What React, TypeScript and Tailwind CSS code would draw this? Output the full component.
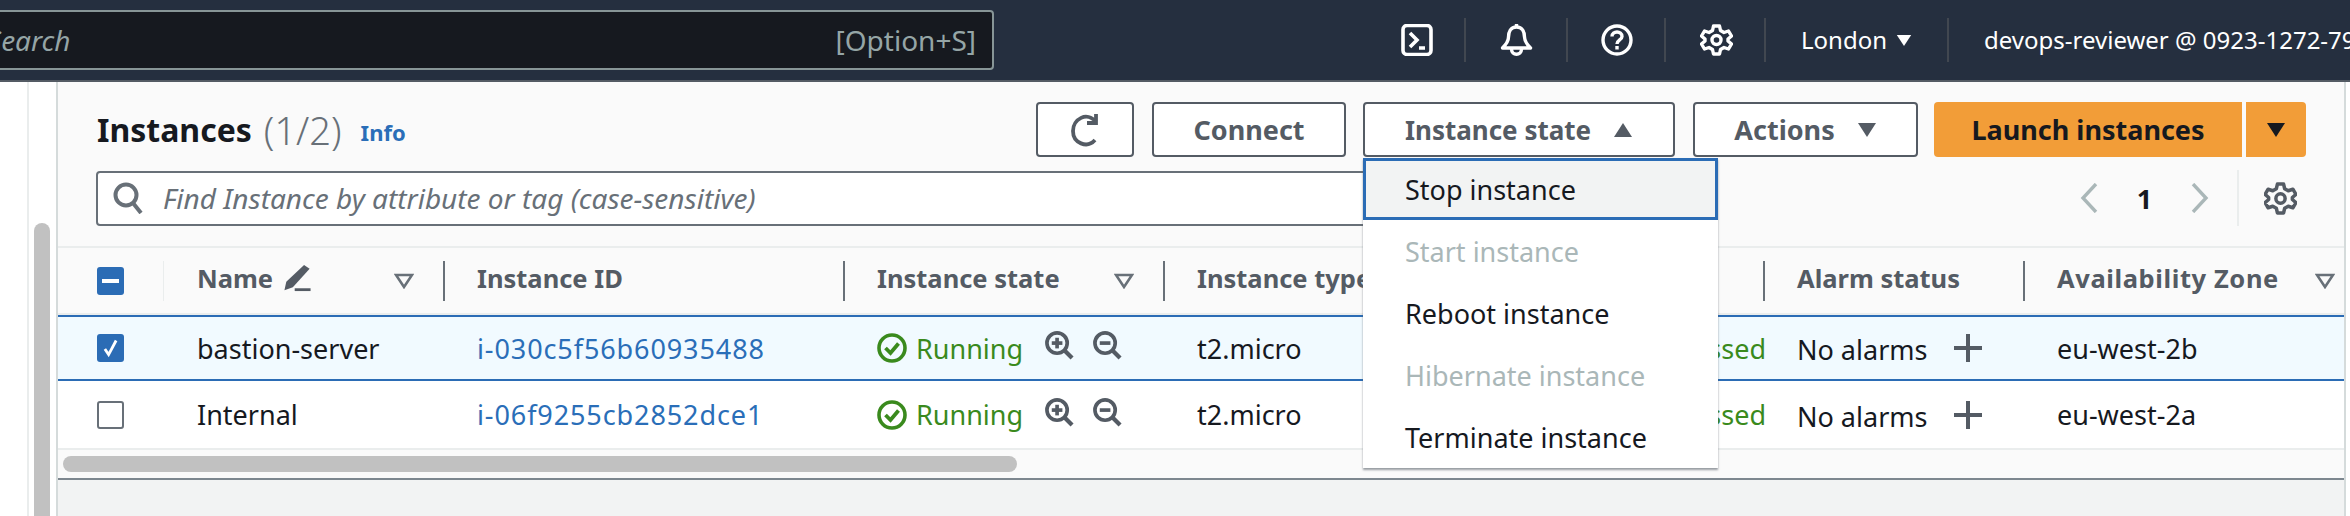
const Caret = ({ up, className }: { up?: boolean; className: string }) => (
  <svg viewBox="0 0 20 16" className={className} fill="currentColor">
    <path d={up ? 'M10 1 L19 15 L1 15 Z' : 'M1 1 L19 1 L10 15 Z'} />
  </svg>
)

const FilterArrow = () => (
  <svg viewBox="0 0 20 16" className="w-[20px] h-[16px] text-[#687078]" fill="none" stroke="currentColor" strokeWidth="2.6">
    <path d="M2 2 H18 L10 14 Z" />
  </svg>
)

const Gear = ({ className }: { className: string }) => (
  <svg viewBox="0 0 32 32" className={className} fill="none" stroke="currentColor" strokeWidth="3.4" strokeLinejoin="round">
    <path d="M13 2 H19 L20 6.5 L23.5 8.5 L28 7 L31 12 L27.5 15 V17 L31 20 L28 25 L23.5 23.5 L20 25.5 L19 30 H13 L12 25.5 L8.5 23.5 L4 25 L1 20 L4.5 17 V15 L1 12 L4 7 L8.5 8.5 L12 6.5 Z" />
    <circle cx="16" cy="16" r="4.5" />
  </svg>
)

const Magnifier = ({ plus }: { plus?: boolean }) => (
  <svg viewBox="0 0 30 30" className="w-[29px] h-[29px] text-[#545b64]" fill="none" stroke="currentColor" strokeWidth="3.8">
    <circle cx="12.5" cy="12.5" r="10.5" />
    <path d="M20 20 L28 28" strokeWidth="4.4" />
    <path d="M7 12.5 H18" />
    {plus && <path d="M12.5 7 V18" />}
  </svg>
)

const Running = () => (
  <div className="flex items-center">
    <svg viewBox="0 0 30 32" className="w-[30px] h-[32px] shrink-0 text-[#3a8a1d]" fill="none" stroke="currentColor" strokeWidth="3.6">
      <circle cx="15" cy="16" r="13" />
      <path d="M8.5 16 L13.5 21 L21.5 11.5" strokeWidth="3.8" />
    </svg>
    <span className="ml-[9px] w-[105px] text-[#3a8a1d]">Running</span>
    <span className="ml-[24px] mb-[5px]"><Magnifier plus /></span>
    <span className="ml-[19px] mb-[5px]"><Magnifier /></span>
  </div>
)

const HeaderCell = ({ width, label, labelWidth, filter, filterGap }: { width: string; label: string; labelWidth?: string; filter?: boolean; filterGap?: string }) => (
  <div className={`flex items-center h-full shrink-0 ${width}`}>
    <span className="w-[2px] h-[40px] bg-[#687078] shrink-0" />
    <span className={`ml-[32px] pb-[3px] whitespace-nowrap ${labelWidth ?? ''}`}>{label}</span>
    {filter && <span className={filterGap}><FilterArrow /></span>}
  </div>
)

const Row = ({ name, id, zone, selected }: { name: string; id: string; zone: string; selected?: boolean }) => (
  <div className={`flex items-center text-[#16191f] ${selected ? 'h-[66px] bg-[#f1faff] border-y-2 border-[#2b6cb5]' : 'h-[67px] bg-white'}`}>
    <div className="w-[105px] pl-[39px] shrink-0">
      {selected ? (
        <div className="w-[27px] h-[28px] rounded-[3px] bg-[#2b6cb5] flex items-center justify-center">
          <svg viewBox="0 0 16 20" className="w-[15px] h-[20px]" fill="none" stroke="white" strokeWidth="3">
            <path d="M2 11 L6 17 L14 2" />
          </svg>
        </div>
      ) : (
        <div className="w-[27px] h-[28px] rounded-[3px] bg-white border-2 border-[#687078]" />
      )}
    </div>
    <div className="w-[280px] pl-[34px] shrink-0">{name}</div>
    <div className="w-[400px] pl-[34px] shrink-0 text-[#2a6eb8] tracking-[0.9px]">{id}</div>
    <div className="w-[320px] pl-[34px] shrink-0"><Running /></div>
    <div className="w-[337px] pl-[34px] shrink-0">t2.micro</div>
    <div className="w-[266px] shrink-0 text-right text-[#3a8a1d] whitespace-nowrap">2/2 checks passed</div>
    <div className="w-[257px] pl-[31px] shrink-0 flex items-center">
      <span className="w-[128px] mt-[3px] whitespace-nowrap">No alarms</span>
      <svg viewBox="0 0 28 28" className="ml-[29px] w-[28px] h-[28px] text-[#545b64]" fill="currentColor">
        <path d="M12 0 H16 V12 H28 V16 H16 V28 H12 V16 H0 V12 H12 Z" />
      </svg>
    </div>
    <div className="pl-[34px]">{zone}</div>
  </div>
)

const Divider = () => <span className="w-[2px] h-[44px] bg-[#414750] shrink-0" />

const OutlineButton = ({ children, className }: { children: React.ReactNode; className: string }) => (
  <div className={`h-[55px] flex items-center justify-center border-2 border-[#545b64] rounded-[4px] bg-white font-bold text-[#545b64] ${className}`}>
    {children}
  </div>
)

export default function App() {
  return (
    <div className="w-[2350px] h-[516px] overflow-hidden flex flex-col bg-white text-[27px] leading-none font-['Noto_Sans',sans-serif]">
      <header className="h-[82px] shrink-0 bg-[#252f3f] border-b-2 border-[#545b64] flex items-center text-white">
        <div className="ml-[-12px] w-[1006px] h-[60px] mb-[1px] shrink-0 flex items-center justify-between pr-[16px] bg-[#16191f] border-2 border-[#879596] rounded-[4px] text-[28px] text-[#95a5a6]">
          <span className="ml-[-3px] italic">Search</span>
          <span>[Option+S]</span>
        </div>
        <div className="ml-[374px] w-[98px] shrink-0 flex items-center justify-between">
          <svg viewBox="0 0 32 32" className="ml-[33px] w-[32px] h-[32px]" fill="none" stroke="white" strokeWidth="3.6">
            <rect x="2" y="1.5" width="28" height="29" rx="4" />
            <path d="M9 9 L16 16 L9 23 M18 24 H24" />
          </svg>
          <Divider />
        </div>
        <div className="w-[102px] shrink-0 flex items-center justify-between">
          <svg viewBox="0 0 32 32" className="ml-[34px] w-[33px] h-[32px]" fill="none" stroke="white" strokeWidth="3.4" strokeLinejoin="round">
            <path d="M16 3 C22 3 24 8 24 13 C24 18 27 21 30 24 H2 C5 21 8 18 8 13 C8 8 10 3 16 3 Z" />
            <path d="M11 25 C11 32 21 32 21 25" />
            <path d="M16 0 V3" />
          </svg>
          <Divider />
        </div>
        <div className="w-[98px] shrink-0 flex items-center justify-between">
          <svg viewBox="0 0 32 32" className="ml-[33px] w-[32px] h-[32px]" fill="none" stroke="white" strokeWidth="3.4">
            <circle cx="16" cy="16" r="14" />
            <path d="M11 12.5 C11 6.5 21 6.5 21 12.5 C21 16 16 16 16 20" />
            <path d="M16 22 V25.5" />
          </svg>
          <Divider />
        </div>
        <div className="w-[100px] shrink-0 flex items-center justify-between">
          <Gear className="ml-[34px] w-[33px] h-[32px]" />
          <Divider />
        </div>
        <div className="w-[183px] shrink-0 flex items-center">
          <span className="ml-[35px] w-[82px] text-[24px]">London</span>
          <Caret className="ml-[13px] w-[16px] h-[13px] text-white" />
          <span className="ml-auto flex"><Divider /></span>
        </div>
        <span className="ml-[35px] shrink-0 text-[24px] whitespace-nowrap">devops-reviewer @ 0923-1272-7911</span>
      </header>

      <div className="flex-1 flex min-h-0">
        <div className="w-[56px] shrink-0 pl-[27px] flex">
          <span className="w-[2px] bg-[#eaeded]" />
          <span className="ml-[5px] mt-[141px] w-[16px] bg-[#c1c1c1] rounded-t-[8px]" />
        </div>

        <div className="relative w-[2290px] shrink-0 border-x-2 border-[#d5dbdb] bg-[#f2f3f3]">
          <div className="h-[396px] bg-[#fafafa] border-b-2 border-[#7d878f] box-content">
            <div className="h-[144px] pl-[39px] pr-[38px] pt-[20px] border-b-2 border-[#eaeded] box-content">
              <div className="flex items-center h-[55px]">
                <h1 className="text-[32px] font-bold text-[#16191f]">Instances</h1>
                <span className="ml-[12px] text-[38px] font-light text-[#687078]">(1/2)</span>
                <span className="ml-[19px] mt-[5px] text-[22px] font-bold text-[#2a6eb8]">Info</span>
                <div className="ml-auto flex items-center">
                  <OutlineButton className="w-[98px]">
                    <svg viewBox="0 0 32 34" className="w-[32px] h-[34px] text-[#545b64]" fill="none" stroke="currentColor" strokeWidth="3.8">
                      <path d="M27 9 C18 -2 4 6 4 18 C4 30 18 36 26 27" />
                      <path d="M27 1 V10 H18" />
                    </svg>
                  </OutlineButton>
                  <OutlineButton className="ml-[18px] w-[194px]">Connect</OutlineButton>
                  <OutlineButton className="ml-[17px] w-[312px] text-[26px]">
                    Instance state
                    <Caret up className="ml-[22px] w-[20px] h-[16px]" />
                  </OutlineButton>
                  <OutlineButton className="ml-[18px] w-[225px]">
                    Actions
                    <Caret className="ml-[22px] w-[20px] h-[16px]" />
                  </OutlineButton>
                  <div className="ml-[16px] w-[308px] h-[55px] flex items-center justify-center bg-[#f29d38] rounded-l-[4px] font-bold text-[#16191f]">
                    Launch instances
                  </div>
                  <div className="ml-[4px] w-[60px] h-[55px] flex items-center justify-center bg-[#f29d38] rounded-r-[4px] text-[#16191f]">
                    <Caret className="w-[20px] h-[16px]" />
                  </div>
                </div>
              </div>

              <div className="mt-[13px] flex items-center h-[56px]">
                <div className="ml-[-1px] w-[1400px] h-[55px] flex items-center pl-[15px] bg-white border-2 border-[#687078] rounded-[4px]">
                  <svg viewBox="0 0 30 32" className="w-[30px] h-[32px] text-[#687078]" fill="none" stroke="currentColor" strokeWidth="4">
                    <circle cx="13" cy="13" r="10.5" />
                    <path d="M20 21 L28 31" />
                  </svg>
                  <span className="ml-[20px] text-[28px] italic text-[#687078]">Find Instance by attribute or tag (case-sensitive)</span>
                </div>
                <div className="ml-auto flex items-center">
                  <svg viewBox="0 0 18 30" className="w-[18px] h-[30px] text-[#aab7b8]" fill="none" stroke="currentColor" strokeWidth="3.4">
                    <path d="M16 1 L3 15 L16 29" />
                  </svg>
                  <span className="w-[93px] text-center font-bold text-[#16191f]">1</span>
                  <svg viewBox="0 0 18 30" className="w-[18px] h-[30px] text-[#aab7b8]" fill="none" stroke="currentColor" strokeWidth="3.4">
                    <path d="M2 1 L15 15 L2 29" />
                  </svg>
                  <span className="ml-[28px] w-[2px] h-[56px] bg-[#eaeded]" />
                  <Gear className="ml-[25px] mr-[9px] w-[33px] h-[33px] text-[#545b64]" />
                </div>
              </div>
            </div>

            <div className="flex items-center h-[65px] border-b-2 border-[#eaeded] box-content font-bold text-[25.5px] text-[#545b64]">
              <div className="w-[105px] pl-[39px] shrink-0 flex items-center h-full">
                <div className="w-[27px] h-[28px] rounded-[3px] bg-[#2b6cb5] flex items-center justify-center">
                  <span className="w-[17px] h-[4px] bg-white" />
                </div>
              </div>
              <div className="w-[280px] shrink-0 flex items-center h-full">
                <span className="w-[1px] h-[40px] bg-[#eaeded] shrink-0" />
                <span className="ml-[33px] pb-[3px] w-[76px] whitespace-nowrap">Name</span>
                <svg viewBox="0 0 30 30" className="ml-[10px] mb-[5px] w-[29px] h-[28px] text-[#545b64]" fill="currentColor">
                  <path d="M22 1 L28 5 L10 25 L1 28 L3 19 Z" />
                  <path d="M12 26 H29 V29 H12 Z" />
                </svg>
                <span className="ml-[82px]"><FilterArrow /></span>
              </div>
              <HeaderCell width="w-[400px]" label="Instance ID" />
              <HeaderCell width="w-[320px]" label="Instance state" labelWidth="w-[205px]" filter filterGap="ml-[32px]" />
              <HeaderCell width="w-[600px]" label="Instance type" />
              <HeaderCell width="w-[260px]" label="Alarm status" />
              <HeaderCell width="w-[320px]" label="Availability Zone" labelWidth="w-[258px] tracking-[0.6px]" filter filterGap="ml-[0px]" />
            </div>

            <Row name="bastion-server" id="i-030c5f56b60935488" zone="eu-west-2b" selected />
            <Row name="Internal" id="i-06f9255cb2852dce1" zone="eu-west-2a" />
            <div className="h-[30px] border-t-2 border-[#eaeded] pt-[6px] pl-[5px]">
              <div className="w-[954px] h-[16px] rounded-[8px] bg-[#c1c1c1]" />
            </div>
          </div>

          <div className="absolute left-[1305px] top-[76px] w-[355px] bg-white text-[#16191f] shadow-[0_2px_2px_rgba(84,91,100,0.6)]">
            <div className="h-[62px] flex items-center pl-[39px] bg-[#f2f3f3] border-[3px] border-[#2b6cb5]">Stop instance</div>
            <div className="h-[62px] flex items-center pl-[42px] text-[#aab7b8]">Start instance</div>
            <div className="h-[62px] flex items-center pl-[42px]">Reboot instance</div>
            <div className="h-[62px] flex items-center pl-[42px] text-[#aab7b8]">Hibernate instance</div>
            <div className="h-[62px] flex items-center pl-[42px]">Terminate instance</div>
          </div>
        </div>
      </div>
    </div>
  )
}
